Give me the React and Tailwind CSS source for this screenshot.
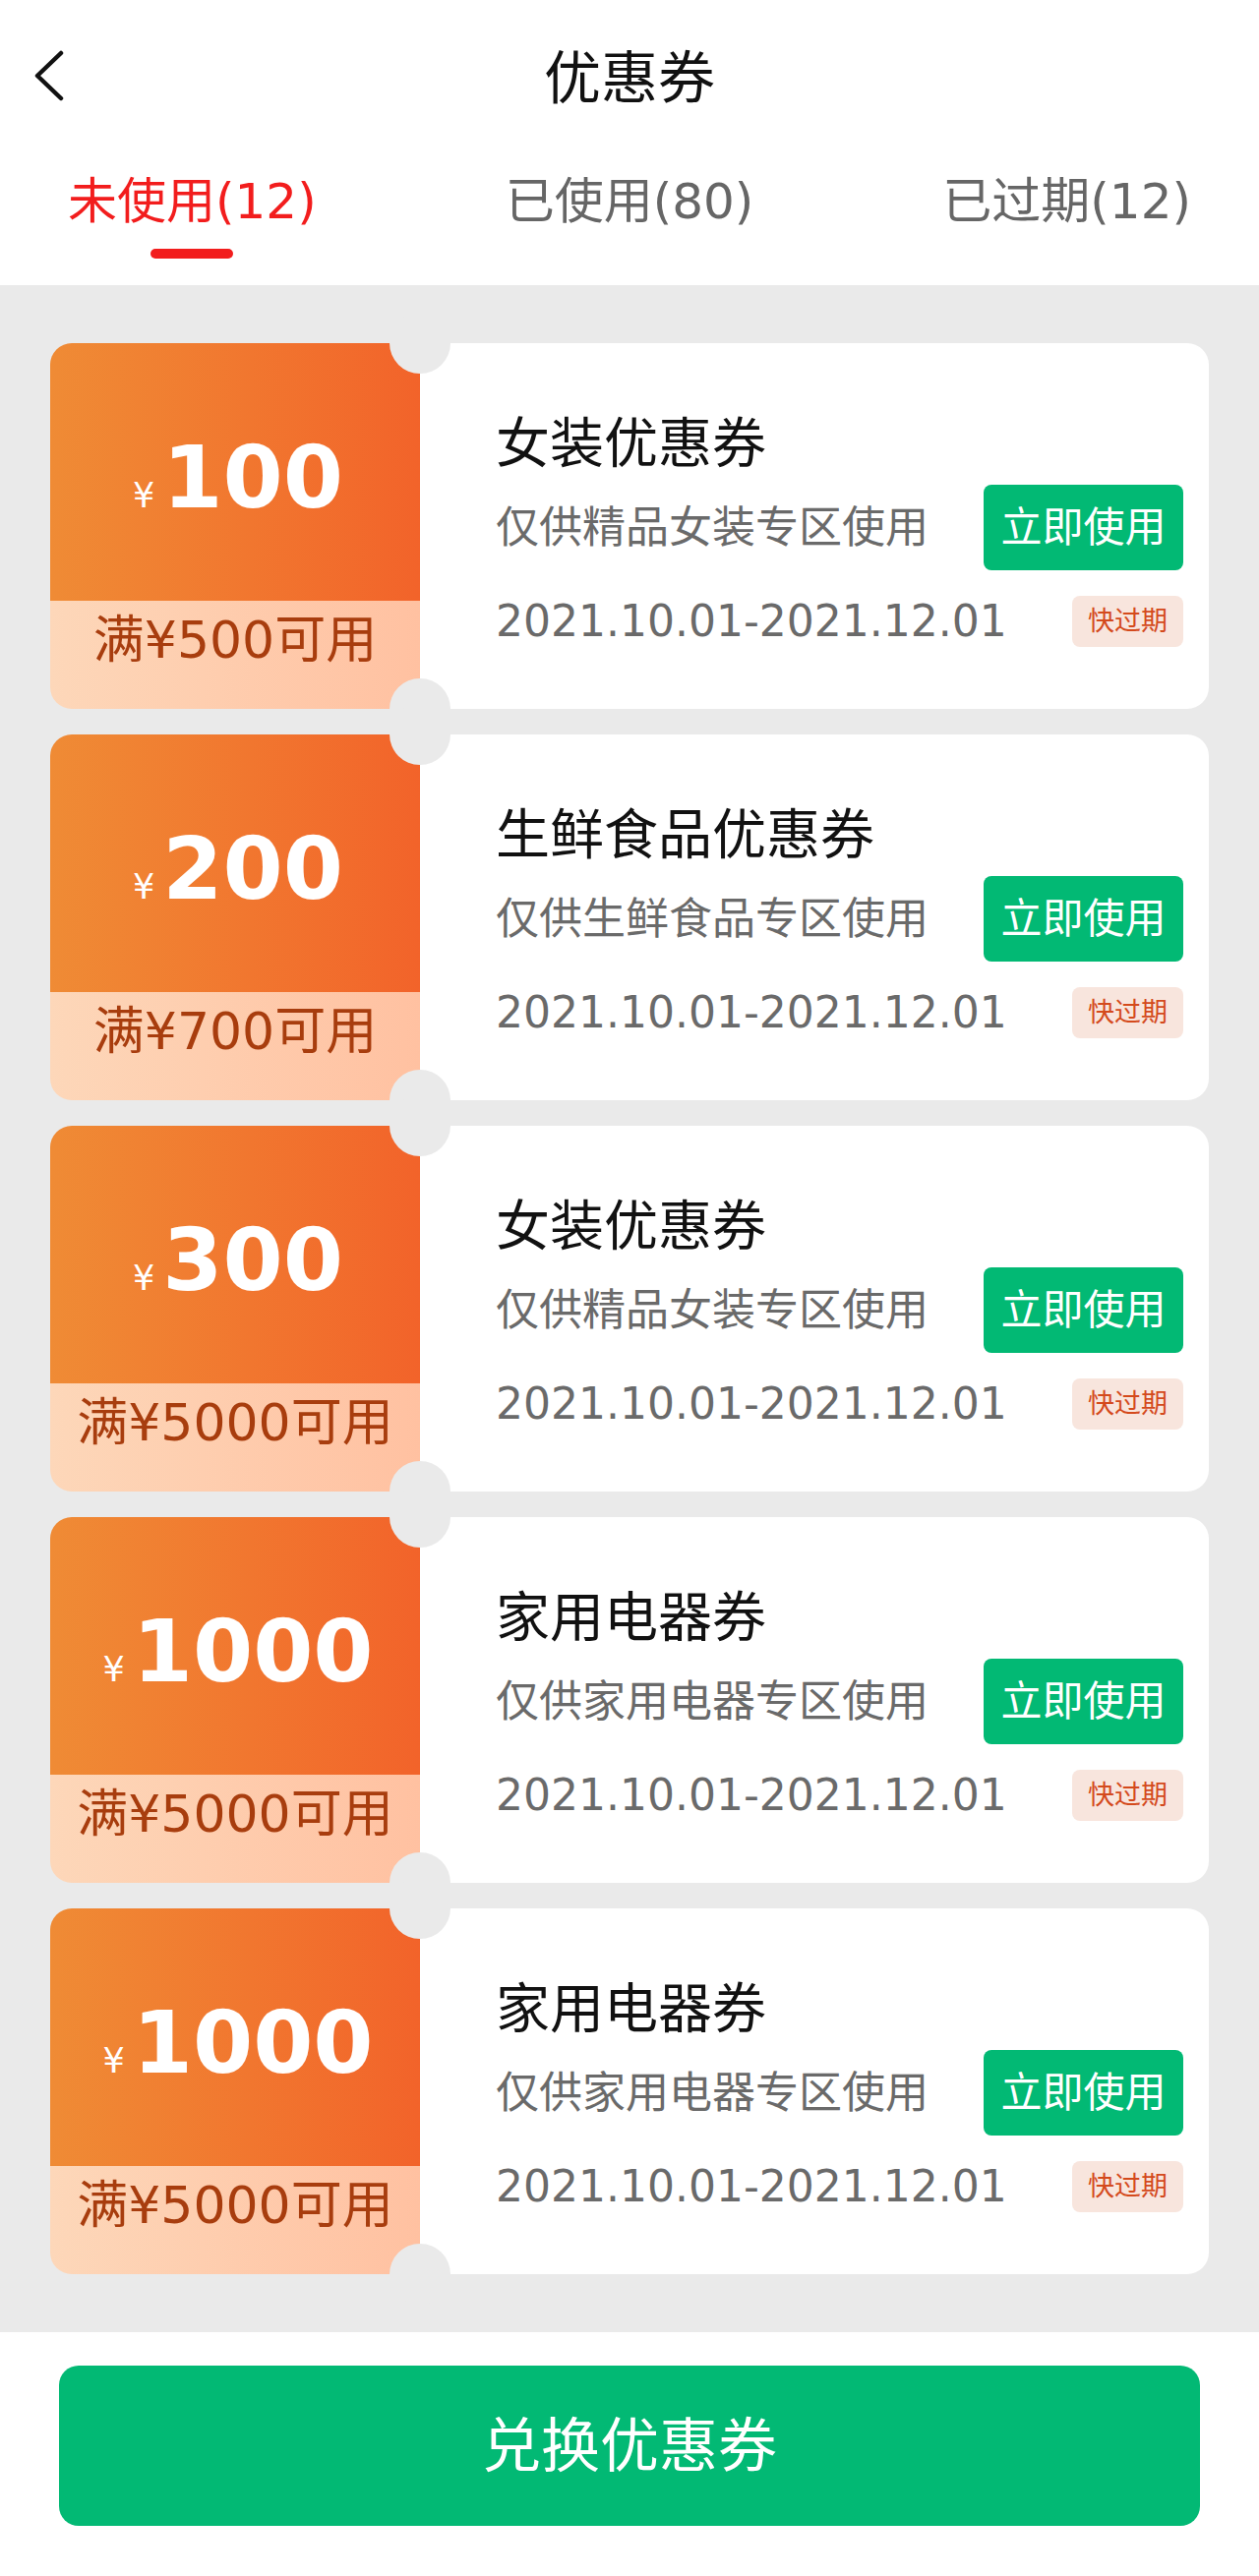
import React from "react";

const coupons = [
  { amount: "100", limit: "满¥500可用", title: "女装优惠券", desc: "仅供精品女装专区使用" },
  { amount: "200", limit: "满¥700可用", title: "生鲜食品优惠券", desc: "仅供生鲜食品专区使用" },
  { amount: "300", limit: "满¥5000可用", title: "女装优惠券", desc: "仅供精品女装专区使用" },
  { amount: "1000", limit: "满¥5000可用", title: "家用电器券", desc: "仅供家用电器专区使用" },
  { amount: "1000", limit: "满¥5000可用", title: "家用电器券", desc: "仅供家用电器专区使用" },
];

function Coupon({ c }) {
  return (
    <div className="relative flex h-[372px] w-[1178px]">
      <div className="flex w-[376px] flex-col overflow-hidden rounded-l-[22px]">
        <div className="flex h-[262px] items-center justify-center bg-gradient-to-r from-[#ef8b35] to-[#f2632a] pl-[6px] pt-[12px]">
          <div className="flex items-baseline text-white">
            <span className="mr-[8px] text-[35px] leading-none">¥</span>
            <span className="text-[88px] font-bold leading-none">{c.amount}</span>
          </div>
        </div>
        <div className="flex h-[110px] justify-center bg-gradient-to-r from-[#fdd7b9] to-[#ffc1a1] pt-[10px]">
          <span className="text-[52px] leading-[60px] text-[#a83d0e]">{c.limit}</span>
        </div>
      </div>
      <div className="flex flex-1 flex-col rounded-r-[22px] bg-white pl-[77px] pr-[26px] pt-[72px]">
        <div className="h-[60px] text-[55px] leading-[60px] text-[#111]">{c.title}</div>
        <div className="mt-[12px] flex h-[87px] items-center justify-between">
          <span className="text-[44px] leading-[60px] text-[#6a6a6a]">{c.desc}</span>
          <div className="flex h-[87px] w-[203px] items-center justify-center rounded-[8px] bg-[#02b974] text-[42px] text-white">
            立即使用
          </div>
        </div>
        <div className="mt-[26px] flex h-[52px] items-center justify-between">
          <span className="text-[44px] leading-[52px] text-[#6a6a6a]">2021.10.01-2021.12.01</span>
          <div className="flex h-[52px] w-[113px] items-center justify-center rounded-[8px] bg-[#f8e5dd] text-[27px] text-[#d44a1c]">
            快过期
          </div>
        </div>
      </div>
      <div className="absolute left-[345px] top-[-31px] h-[62px] w-[62px] rounded-full bg-[#eaeaea]" />
      <div className="absolute bottom-[-31px] left-[345px] h-[62px] w-[62px] rounded-full bg-[#eaeaea]" />
    </div>
  );
}

export default function App() {
  return (
    <div className="w-[1280px] bg-white font-['DejaVu_Sans','Noto_Sans_CJK_SC',sans-serif]">
      <div className="bg-white">
        <div className="flex h-[154px] items-center">
          <div className="flex w-[120px] items-center pl-[34px]">
            <svg width="32" height="52" viewBox="0 0 32 52" fill="none">
              <path d="M28 3 L4 26 L28 49" stroke="#111" strokeWidth="4.5" strokeLinecap="round" strokeLinejoin="round" />
            </svg>
          </div>
          <div className="flex-1 pt-[6px] text-center text-[58px] leading-[70px] text-[#111]">优惠券</div>
          <div className="w-[120px]" />
        </div>
        <div className="flex justify-between px-[69px] pb-[27px] pt-[21px]">
          <div className="flex flex-col items-center">
            <span className="text-[50px] leading-[60px] text-[#f21d1d]">未使用(12)</span>
            <div className="mt-[18px] h-[10px] w-[84px] rounded-full bg-[#f21d1d]" />
          </div>
          <div className="flex flex-col items-center">
            <span className="text-[50px] leading-[60px] text-[#666]">已使用(80)</span>
          </div>
          <div className="flex flex-col items-center">
            <span className="text-[50px] leading-[60px] text-[#666]">已过期(12)</span>
          </div>
        </div>
      </div>
      <div className="flex flex-col items-center gap-[26px] bg-[#eaeaea] py-[59px]">
        {coupons.map((c, i) => (
          <Coupon key={i} c={c} />
        ))}
      </div>
      <div className="h-[249px] bg-white px-[60px] pt-[34px]">
        <div className="flex h-[163px] items-center justify-center rounded-[20px] bg-[#02b974] text-[60px] text-white">
          兑换优惠券
        </div>
      </div>
    </div>
  );
}
